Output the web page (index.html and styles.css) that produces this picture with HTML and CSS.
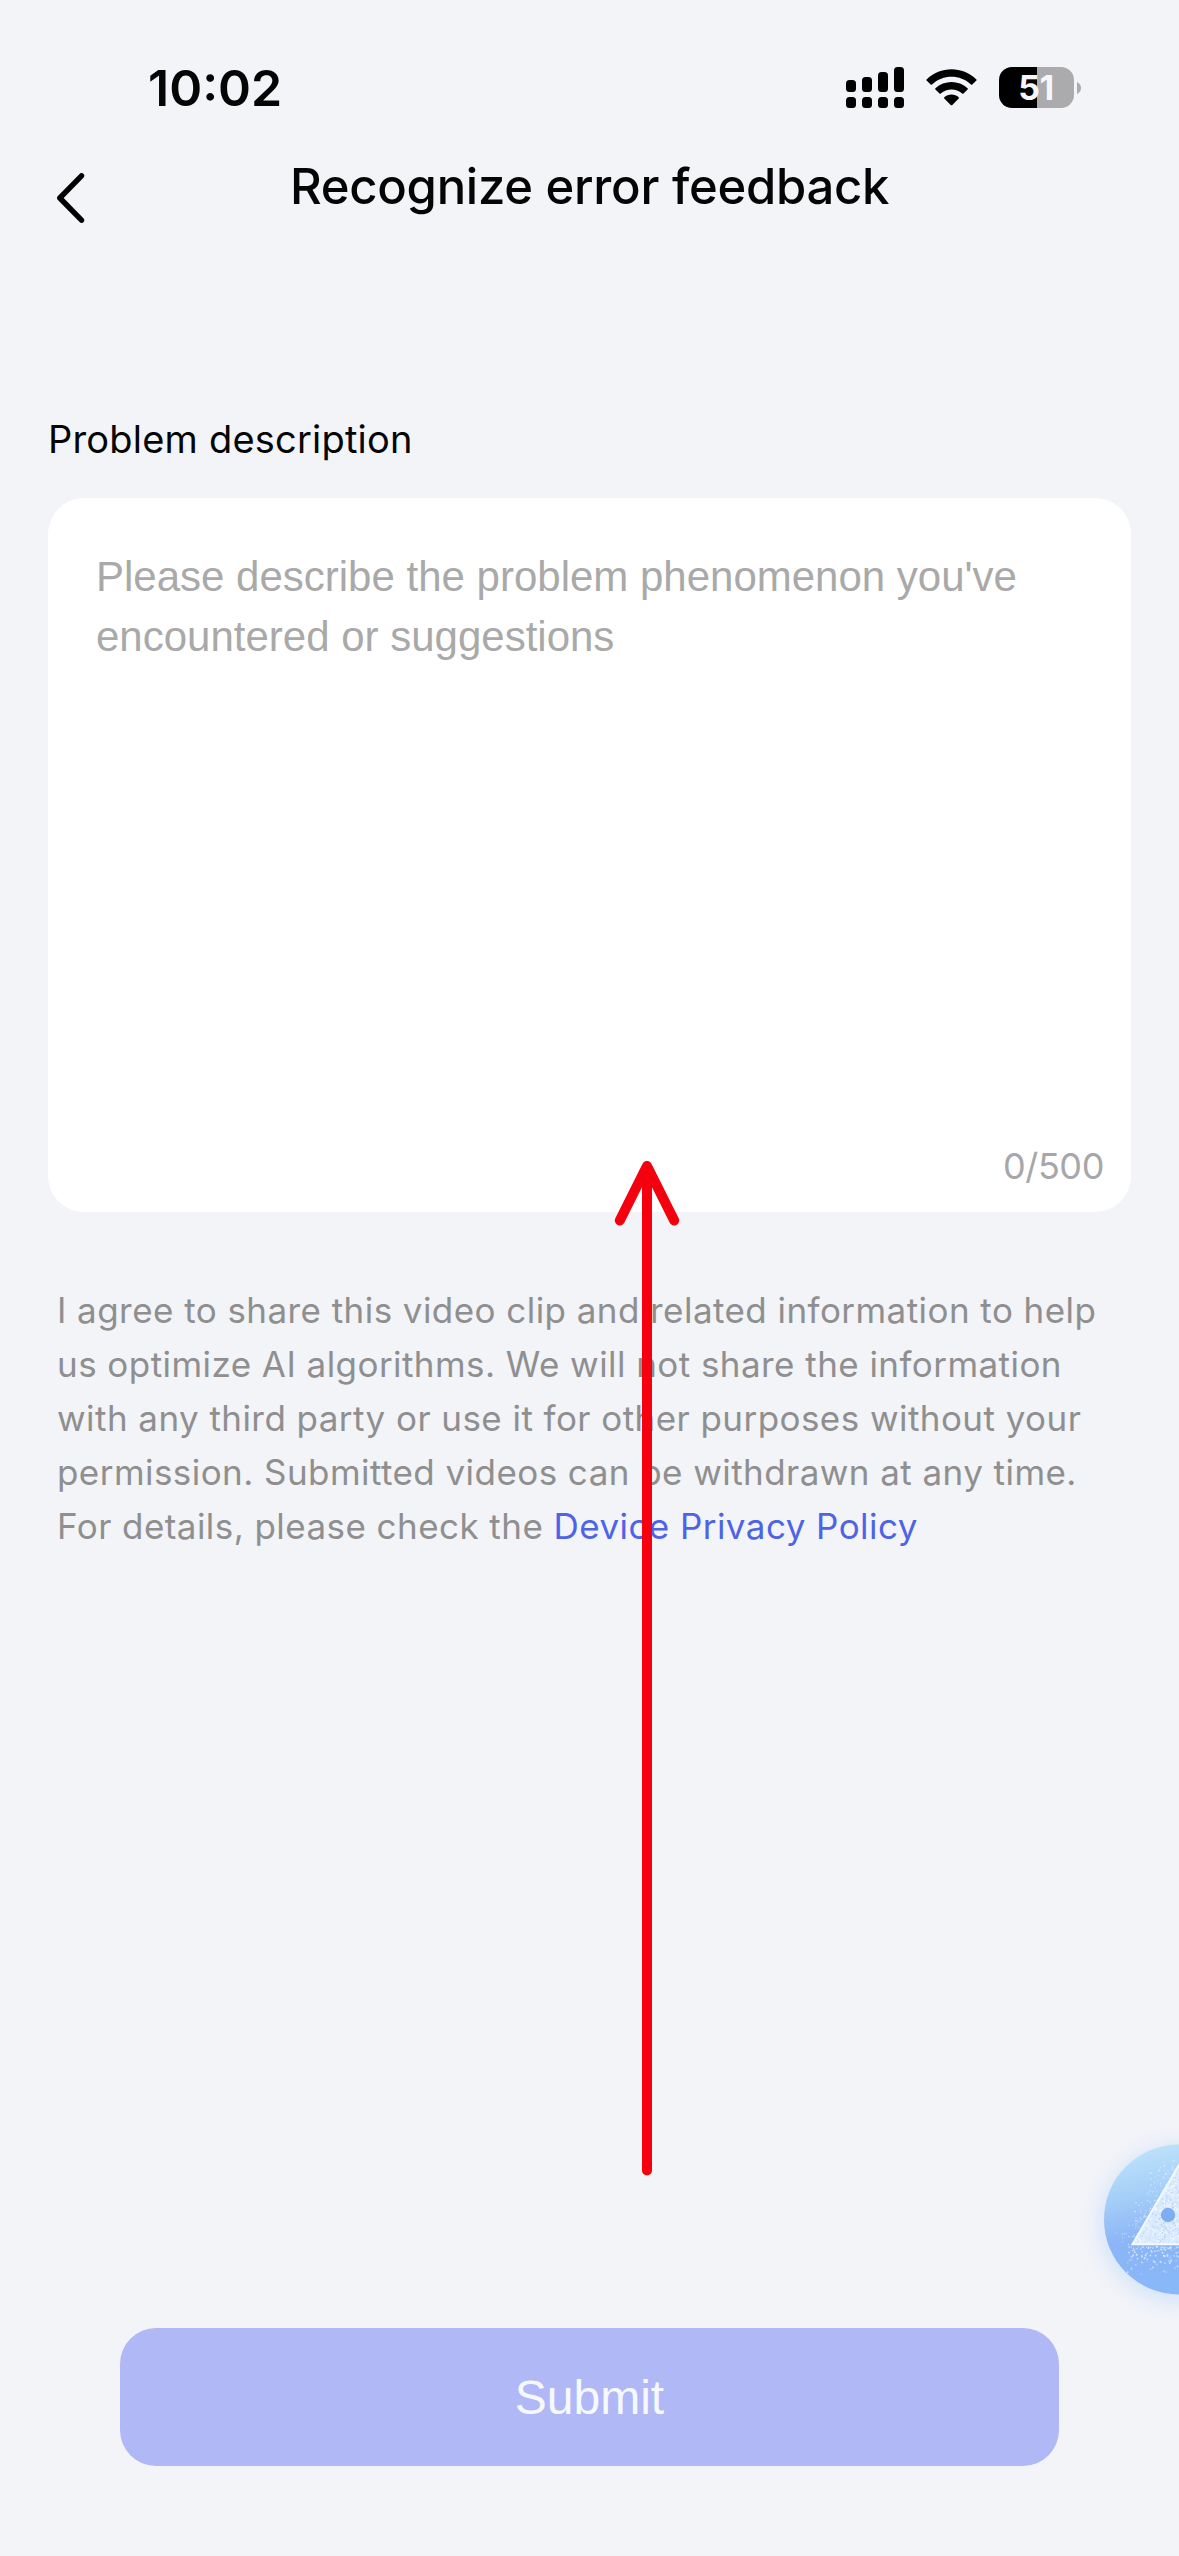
FILE: index.html
```html
<!DOCTYPE html>
<html lang="en">
<head>
<meta charset="utf-8">
<title>Recognize error feedback</title>
<link rel="stylesheet" href="styles.css">
</head>
<body>
<div class="screen">
  <header class="status">
    <span class="time">10:02</span>
    <div class="indicators">
      <svg class="signal" viewBox="0 0 58 41" width="58" height="41">
        <rect x="0" y="13" width="10" height="12" rx="3.5"/><rect x="16" y="10" width="10" height="15" rx="3.5"/><rect x="32" y="5" width="10" height="20" rx="3.5"/><rect x="48" y="0" width="10" height="25" rx="3.5"/>
        <rect x="0" y="30" width="10" height="11" rx="3.5"/><rect x="16" y="30" width="10" height="11" rx="3.5"/><rect x="32" y="30" width="10" height="11" rx="3.5"/><rect x="48" y="30" width="10" height="11" rx="3.5"/>
      </svg>
      <svg class="wifi" viewBox="0 0 51 37" width="51" height="37">
        <path d="M0.6 10.4C14.500 -3.100 36.500 -3.100 50.400 10.400Q50.900 11 50.400 11.600L46.300 15.600Q45.600 16 45 15.500C34 5.200 17 5.200 6 15.500Q5.400 16 4.700 15.600L0.600 11.600Q0.100 11 0.600 10.400Z"/>
        <path d="M9.400 19.300C18.300 10.900 32.700 10.900 41.600 19.300Q42.100 20 41.600 20.600L37.500 24.500Q36.800 25 36.200 24.500C30.200 19.200 20.800 19.200 14.800 24.500Q14.200 25 13.500 24.500L9.400 20.600Q8.900 20 9.400 19.300Z"/>
        <path d="M18.300 28.200C22.300 24.700 28.700 24.700 32.700 28.200Q33.300 28.900 32.700 29.500L26.300 35.900Q25.500 36.600 24.700 35.900L18.300 29.500Q17.700 28.900 18.300 28.200Z"/>
      </svg>
      <div class="battery"><span class="level">51</span><svg viewBox="0 0 4 12" width="4" height="12"><path d="M0 0Q4 2 4 6T0 12Z" fill="#ababad"/></svg></div>
    </div>
  </header>
  <nav class="bar">
    <svg class="back" viewBox="0 0 30 50" width="30" height="50"><path d="M26.500 2.800L4.800 25L26.500 47.200"/></svg>
    <h1 class="title">Recognize error feedback</h1>
  </nav>
  <main class="form">
    <h2 class="label">Problem description</h2>
    <section class="card">
      <p class="placeholder">Please describe the problem phenomenon you've<br>encountered or suggestions</p>
      <div class="counter">0/500</div>
    </section>
    <p class="consent">I agree to share this video clip and related information to help<br>us optimize AI algorithms. We will not share the information<br>with any third party or use it for other purposes without your<br>permission. Submitted videos can be withdrawn at any time.<br>For details, please check the <a class="policy">Device Privacy Policy</a></p>
  </main>
  <button class="submit">Submit</button>

  <svg class="arrow" viewBox="0 0 70 1020" width="70" height="1020"><path d="M35 1013.500V9M7.800 63.500L35 9L62.200 63.500"/></svg>

  <svg class="assistant" viewBox="0 0 119 220" width="119" height="220">
    <defs>
      <linearGradient id="ball" x1="0.300" y1="0" x2="0.500" y2="1">
        <stop offset="0" stop-color="#bee3fa"/><stop offset="0.300" stop-color="#a6cff8"/><stop offset="0.600" stop-color="#8bb5f6"/><stop offset="1" stop-color="#88b8f8"/>
      </linearGradient>
      <filter id="halo" x="-40%" y="-40%" width="180%" height="180%"><feGaussianBlur stdDeviation="12"/></filter>
      <clipPath id="tri"><path d="M71.500 135L119 53V135Z"/></clipPath>
    </defs>
    <circle cx="119" cy="114" r="77" fill="#a9cdfb" opacity="0.500" filter="url(#halo)"/>
    <circle cx="119" cy="109.500" r="75" fill="url(#ball)"/>
    <path d="M71.500 135L119 53V135Z" fill="#d9e9fd"/>
    <g id="grain" clip-path="url(#tri)"></g>
    <g id="dust"></g>
    <path d="M119 55L72.500 134.300H119" fill="none" stroke="#f3f9ff" stroke-width="2"/>
    <circle cx="108" cy="105" r="7.200" fill="#7fadf2"/>
  </svg>
</div>
<script src="particles.js"></script>
</body>
</html>
```
FILE: styles.css
```css
* { box-sizing: border-box; }
body { margin: 0; background: #f3f4f8; color: #050505; font-family: Inter, sans-serif; }
.screen { position: relative; width: 1179px; height: 2556px; overflow: hidden; display: flex; flex-direction: column; }
h1, h2, p { margin: 0; font-weight: 400; }
.status { display: flex; justify-content: space-between; height: 108px; padding: 58px 98px 0 148px; }
.time { font-size: 50px; font-weight: 600; line-height: 60px; letter-spacing: 0; white-space: nowrap; }
.indicators { display: flex; align-items: flex-start; padding-top: 9px; }
.wifi { margin: 2px 22px 0; }
.battery { display: flex; align-items: center; gap: 3px; }
.level { width: 75px; height: 41px; padding-right: 1px; border-radius: 13px; background: linear-gradient(90deg, #000 38px, #ababad 38px); color: #f7f7fa; font-size: 34px; font-weight: 700; line-height: 41px; text-align: center; letter-spacing: -0.5px; }
.bar { display: flex; height: 311px; padding: 48px 56px 0 55px; }
.back { flex: none; margin-top: 17px; fill: none; stroke: #000; stroke-width: 5.4; stroke-linecap: round; stroke-linejoin: round; }
.title { flex: 1; padding: 1px 29px 0 0; font-size: 49px; font-weight: 500; line-height: 60px; letter-spacing: -0.27px; text-align: center; white-space: nowrap; }
.form { padding: 0 48px; }
.label { height: 79px; font-size: 38px; line-height: 40px; letter-spacing: 0.2px; white-space: nowrap; }
.card { display: flex; flex-direction: column; justify-content: space-between; height: 714px; padding: 49px 27px 24px 48px; background: #fff; border-radius: 36px; }
.placeholder { color: #a9a9a9; font-family: "Liberation Sans", sans-serif; font-size: 42px; line-height: 60px; white-space: nowrap; }
.counter { color: #a7a7aa; font-size: 36px; line-height: 44px; letter-spacing: -0.4px; text-align: right; }
.consent { padding: 71px 9px 0; color: #8f8f90; font-size: 35px; line-height: 54px; letter-spacing: 0.44px; white-space: nowrap; }
.policy { color: #4f63e6; }
.submit { width: 939px; height: 138px; margin: auto auto 90px; padding: 2px 0 0; border: 0; border-radius: 36px; background: #b0b8f5; color: #f7f8fe; font: 48px/60px "Liberation Sans", sans-serif; }
.arrow { position: absolute; left: 611.5px; top: 1157px; fill: none; stroke: #f4000f; stroke-width: 10; stroke-linecap: round; stroke-linejoin: round; }
.assistant { position: absolute; left: 1060px; top: 2110px; }
```
FILE: particles.js
```javascript
// Seeded speckles for the assistant ball: grain inside the triangle, dust around its edge.
let seed = 7;
const rnd = () => (seed = (seed * 16807) % 2147483647) / 2147483647;
const dot = (group, x, y, size, fill, alpha) => {
  const r = document.createElementNS("http://www.w3.org/2000/svg", "rect");
  Object.entries({ x, y, width: size, height: size, fill, opacity: alpha }).forEach(([k, v]) => r.setAttribute(k, v));
  group.appendChild(r);
};
const grain = document.getElementById("grain");
const dust = document.getElementById("dust");
for (let i = 0; i < 700; i++) dot(grain, 71 + rnd() * 48, 53 + rnd() * 82, 1.3, rnd() > 0.3 ? "#fafdff" : "#aecbf7", 0.75);
for (let i = 0; i < 90; i++) {
  const t = rnd();
  dot(dust, 71 + t * 46 - rnd() * rnd() * 26, 135 - t * 80 - rnd() * 8, 1.3, "#e6f2ff", 0.3 + rnd() * 0.5);
}
for (let i = 0; i < 110; i++) dot(dust, 66 + rnd() * 53, 136 + rnd() * rnd() * 32, 1.5, "#e6f2ff", 0.3 + rnd() * 0.6);
```
